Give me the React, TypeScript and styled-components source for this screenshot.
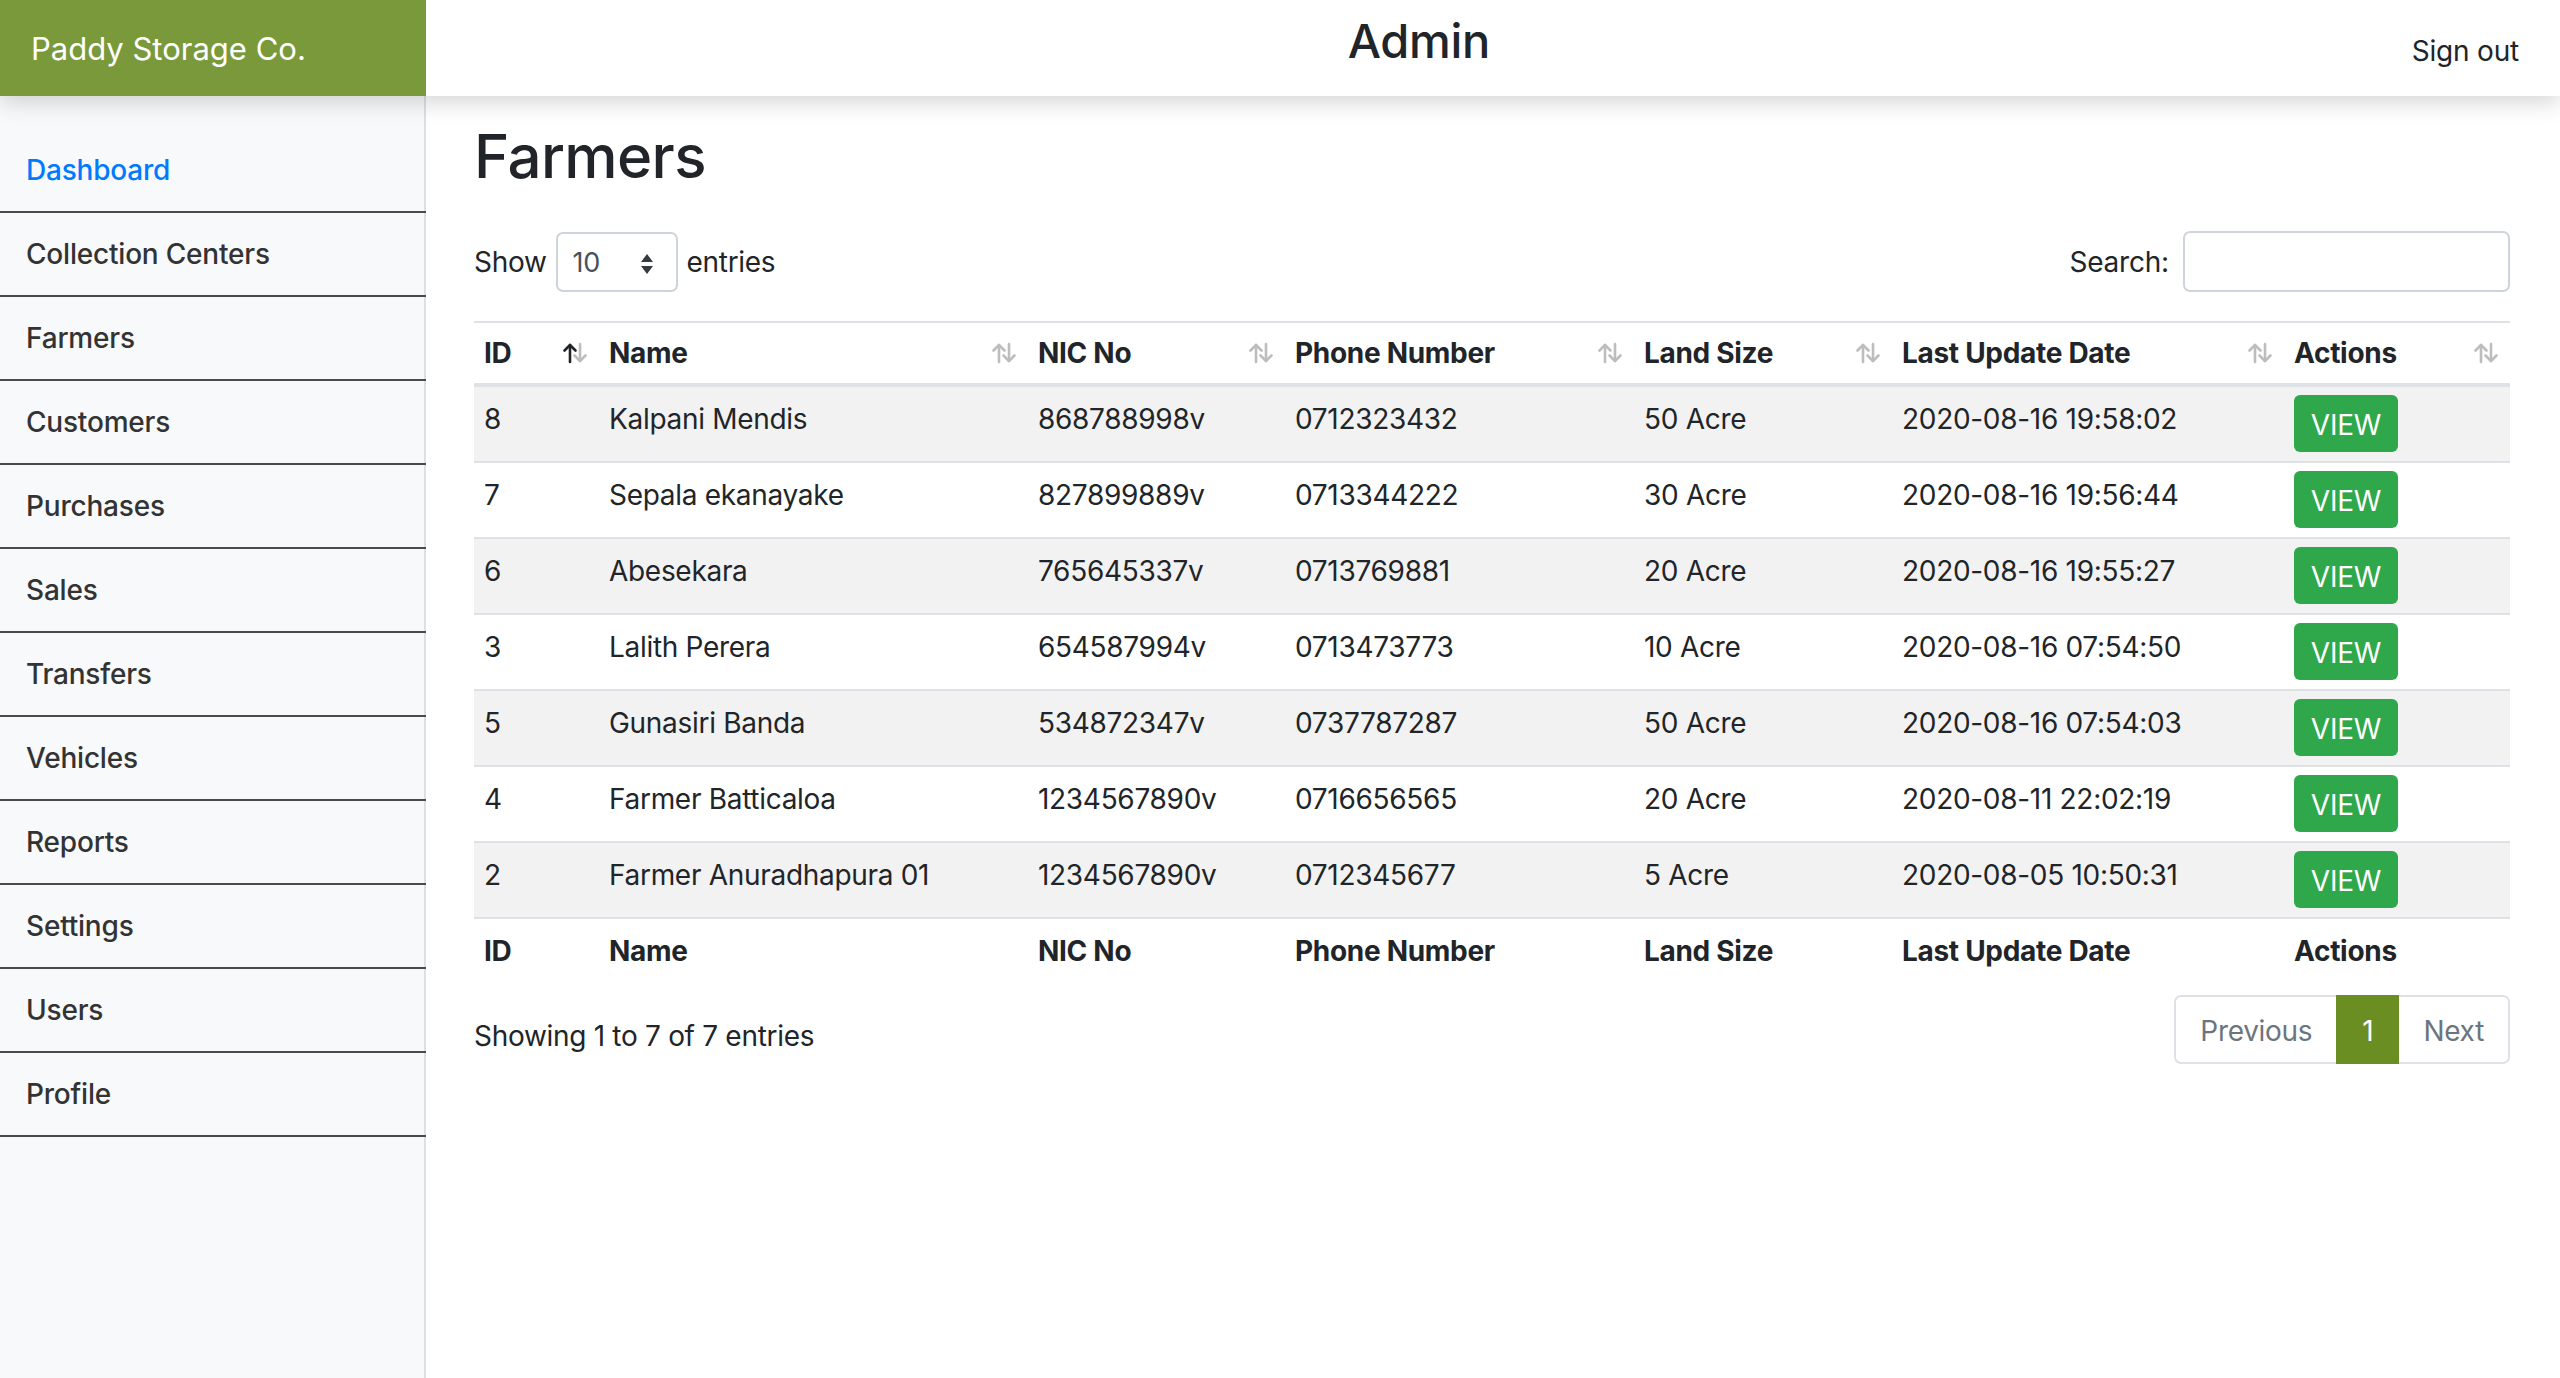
import React from "react";
import styled, { createGlobalStyle } from "styled-components";

const GlobalStyle = createGlobalStyle`
  html, body { margin: 0; padding: 0; }
  body {
    font-family: "Inter", "Liberation Sans", sans-serif;
    color: #212529;
    background: #ffffff;
    font-size: 28px;
    line-height: 1.5;
  }
  * { box-sizing: border-box; }
`;

const Header = styled.header`
  position: relative;
  z-index: 2;
  display: flex;
  align-items: stretch;
  height: 96px;
  background: #ffffff;
  box-shadow: 0 6px 22px rgba(0, 0, 0, 0.17);
`;

const Brand = styled.div`
  width: 426px;
  flex: 0 0 426px;
  display: flex;
  align-items: center;
  padding: 2px 0 0 31px;
  background: #7a993a;
  color: #ffffff;
  font-size: 31px;
`;

const Title = styled.div`
  flex: 1;
  display: flex;
  justify-content: center;
  align-items: flex-start;
  padding-top: 13px;
  font-size: 47px;
  font-weight: 500;
  line-height: 1.2;
  letter-spacing: -0.3px;
`;

const SignOut = styled.a`
  display: flex;
  align-items: center;
  padding: 6px 41px 0 0;
  font-size: 28px;
  color: #212529;
  text-decoration: none;
  letter-spacing: -0.2px;
`;

const Body = styled.div`
  display: flex;
  min-height: calc(100vh - 96px);
`;

const Sidebar = styled.nav`
  width: 426px;
  flex: 0 0 426px;
  background: #f8f9fa;
  box-shadow: inset -2px 0 0 rgba(0, 0, 0, 0.1);
  padding-top: 33px;
`;

const NavItem = styled.a<{ $active?: boolean }>`
  display: flex;
  align-items: center;
  height: 84px;
  padding: 0 0 0 26px;
  border-bottom: 2px solid #4a4a4a;
  font-size: 28px;
  font-weight: 500;
  letter-spacing: -0.2px;
  color: ${(p) => (p.$active ? "#007bff" : "#333333")};
  text-decoration: none;
`;

const Main = styled.main`
  flex: 1;
  padding: 24px 50px 0 48px;
`;

const PageTitle = styled.h1`
  margin: 0 0 39px;
  font-size: 60px;
  font-weight: 500;
  line-height: 1.2;
  letter-spacing: -0.6px;
`;

const Controls = styled.div`
  display: flex;
  justify-content: space-between;
  align-items: center;
  height: 61px;
  margin-bottom: 29px;
`;

const LengthLabel = styled.label`
  display: flex;
  align-items: center;
  gap: 9px;
  font-size: 28px;
  letter-spacing: -0.3px;
`;

const SelectBox = styled.div`
  display: flex;
  align-items: center;
  justify-content: space-between;
  width: 122px;
  height: 60px;
  padding: 4px 22px 0 15px;
  border: 2px solid #ced4da;
  border-radius: 7px;
  background: #ffffff;
  color: #495057;
  font-size: 27px;
`;

const SearchLabel = styled.label`
  display: flex;
  align-items: center;
  gap: 14px;
  font-size: 28px;
  letter-spacing: -0.2px;
`;

const SearchInput = styled.input`
  width: 327px;
  height: 61px;
  border: 2px solid #ced4da;
  border-radius: 7px;
  font-size: 28px;
  padding: 0 14px;
  outline: none;
`;

const Table = styled.table`
  width: 100%;
  table-layout: fixed;
  border-collapse: collapse;
  border-top: 2px solid #dee2e6;
  font-size: 28px;
  letter-spacing: -0.3px;
`;

const HeadCell = styled.th`
  padding: 9px 10px;
  text-align: left;
  font-weight: 700;
  line-height: 42px;
  border-bottom: 4px solid #dee2e6;
`;

const HeadInner = styled.div`
  display: flex;
  justify-content: space-between;
  align-items: center;
`;

const Row = styled.tr<{ $striped?: boolean }>`
  background: ${(p) => (p.$striped ? "#f2f2f2" : "#ffffff")};
`;

const Cell = styled.td`
  padding: 8px 10px 9px;
  vertical-align: top;
  line-height: 48px;
  border-top: 2px solid #dee2e6;
  white-space: nowrap;
`;

const FootCell = styled.th`
  padding: 11px 10px 5px;
  text-align: left;
  font-weight: 700;
  line-height: 42px;
  border-top: 2px solid #dee2e6;
`;

const ViewButton = styled.button`
  display: inline-flex;
  align-items: center;
  justify-content: center;
  vertical-align: top;
  height: 57px;
  width: 104px;
  padding: 2px 0 0;
  border: none;
  border-radius: 6px;
  background: #2ea84a;
  color: #ffffff;
  font-family: inherit;
  font-size: 28px;
  letter-spacing: -0.2px;
`;

const Footer = styled.div`
  display: flex;
  justify-content: space-between;
  align-items: flex-start;
  margin-top: 18px;
`;

const Info = styled.div`
  padding-top: 20px;
  line-height: 42px;
  font-size: 28px;
  letter-spacing: -0.3px;
`;

const Pagination = styled.ul`
  display: flex;
  list-style: none;
  margin: 0;
  padding: 0;
`;

const PageItem = styled.li<{ $active?: boolean; $first?: boolean; $last?: boolean }>`
  display: flex;
  align-items: center;
  height: 69px;
  padding: 2px 24px 0;
  margin-left: ${(p) => (p.$first ? "0" : "-2px")};
  border: 2px solid ${(p) => (p.$active ? "#6b8e23" : "#dee2e6")};
  background: ${(p) => (p.$active ? "#6b8e23" : "#ffffff")};
  color: ${(p) => (p.$active ? "#ffffff" : "#6c757d")};
  font-size: 28px;
  letter-spacing: -0.3px;
  border-radius: ${(p) =>
    p.$first ? "7px 0 0 7px" : p.$last ? "0 7px 7px 0" : "0"};
  position: relative;
  z-index: ${(p) => (p.$active ? 1 : 0)};
`;

const SortIcon: React.FC<{ active?: boolean }> = ({ active }) => (
  <svg width="27" height="22" viewBox="0 0 27 22" style={{ flex: "0 0 auto" }}>
    <g fill="none" strokeWidth="2.6" strokeLinecap="round" strokeLinejoin="round">
      <g stroke={active ? "#212529" : "#bdbdbd"}>
        <path d="M8 20 V3" />
        <path d="M2.5 8.5 L8 3 L13.5 8.5" />
      </g>
      <g stroke="#bdbdbd">
        <path d="M18 2 V19" />
        <path d="M12.5 13.5 L18 19 L23.5 13.5" />
      </g>
    </g>
  </svg>
);

const SelectArrows = () => (
  <svg width="14" height="22" viewBox="0 0 14 22">
    <path d="M7 1 L13 9 H1 Z" fill="#343a40" />
    <path d="M7 21 L13 13 H1 Z" fill="#343a40" />
  </svg>
);

const navItems = [
  "Dashboard",
  "Collection Centers",
  "Farmers",
  "Customers",
  "Purchases",
  "Sales",
  "Transfers",
  "Vehicles",
  "Reports",
  "Settings",
  "Users",
  "Profile",
];

const columns = [
  { label: "ID", width: 125 },
  { label: "Name", width: 429 },
  { label: "NIC No", width: 257 },
  { label: "Phone Number", width: 349 },
  { label: "Land Size", width: 258 },
  { label: "Last Update Date", width: 392 },
  { label: "Actions", width: 226 },
];

const rows = [
  ["8", "Kalpani Mendis", "868788998v", "0712323432", "50 Acre", "2020-08-16 19:58:02"],
  ["7", "Sepala ekanayake", "827899889v", "0713344222", "30 Acre", "2020-08-16 19:56:44"],
  ["6", "Abesekara", "765645337v", "0713769881", "20 Acre", "2020-08-16 19:55:27"],
  ["3", "Lalith Perera", "654587994v", "0713473773", "10 Acre", "2020-08-16 07:54:50"],
  ["5", "Gunasiri Banda", "534872347v", "0737787287", "50 Acre", "2020-08-16 07:54:03"],
  ["4", "Farmer Batticaloa", "1234567890v", "0716656565", "20 Acre", "2020-08-11 22:02:19"],
  ["2", "Farmer Anuradhapura 01", "1234567890v", "0712345677", "5 Acre", "2020-08-05 10:50:31"],
];

export default function App() {
  return (
    <>
      <GlobalStyle />
      <Header>
        <Brand>Paddy Storage Co.</Brand>
        <Title>Admin</Title>
        <SignOut href="#">Sign out</SignOut>
      </Header>
      <Body>
        <Sidebar>
          {navItems.map((item, i) => (
            <NavItem key={item} href="#" $active={i === 0}>
              {item}
            </NavItem>
          ))}
        </Sidebar>
        <Main>
          <PageTitle>Farmers</PageTitle>
          <Controls>
            <LengthLabel>
              Show
              <SelectBox>
                <span>10</span>
                <SelectArrows />
              </SelectBox>
              entries
            </LengthLabel>
            <SearchLabel>
              Search:
              <SearchInput type="search" />
            </SearchLabel>
          </Controls>
          <Table>
            <colgroup>
              {columns.map((c) => (
                <col key={c.label} style={{ width: c.width }} />
              ))}
            </colgroup>
            <thead>
              <tr>
                {columns.map((c, i) => (
                  <HeadCell key={c.label}>
                    <HeadInner>
                      <span>{c.label}</span>
                      <SortIcon active={i === 0} />
                    </HeadInner>
                  </HeadCell>
                ))}
              </tr>
            </thead>
            <tbody>
              {rows.map((r, i) => (
                <Row key={r[0]} $striped={i % 2 === 0}>
                  {r.map((v, j) => (
                    <Cell key={j}>{v}</Cell>
                  ))}
                  <Cell>
                    <ViewButton>VIEW</ViewButton>
                  </Cell>
                </Row>
              ))}
            </tbody>
            <tfoot>
              <tr>
                {columns.map((c) => (
                  <FootCell key={c.label}>{c.label}</FootCell>
                ))}
              </tr>
            </tfoot>
          </Table>
          <Footer>
            <Info>Showing 1 to 7 of 7 entries</Info>
            <Pagination>
              <PageItem $first>Previous</PageItem>
              <PageItem $active>1</PageItem>
              <PageItem $last>Next</PageItem>
            </Pagination>
          </Footer>
        </Main>
      </Body>
    </>
  );
}
